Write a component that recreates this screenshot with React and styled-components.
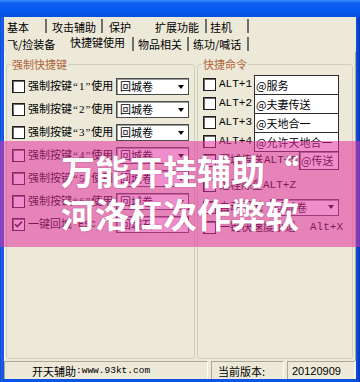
import React from "react";
import styled, { createGlobalStyle } from "styled-components";

const GlobalStyle = createGlobalStyle`
  html, body { margin: 0; padding: 0; background: #ECE9D8; }
  body { font-family: "Noto Sans CJK SC", "Liberation Sans", sans-serif; }
  #root { width: 360px; height: 382px; }
`;

const Win = styled.div`
  position: relative;
  width: 360px;
  height: 382px;
  display: flex;
  flex-direction: column;
  background: linear-gradient(to right, #0a3cc0 0, #1d64ee 1px, #0b53e2 4px, #0b53e2 356px, #083fc4 359px, #052fa8 360px);
  overflow: hidden;
`;

const TitleBar = styled.div`
  height: 17px;
  flex: none;
  background: linear-gradient(to bottom, #3e8ff8 0, #0d5ff4 3px, #0658ee 60%, #0550e2 100%);
`;

const Frame = styled.div`
  flex: 1;
  margin: 0 4px 3px 4px;
  background: #ECE9D8;
  display: flex;
  flex-direction: column;
  min-height: 0;
  font-size: 11px;
  color: #000;
`;

const TabRow = styled.div`
  display: flex;
  height: ${p => p.$h}px;
  flex: none;
`;

const Tab = styled.div`
  box-sizing: border-box;
  width: ${p => p.$w}px;
  padding-left: ${p => p.$pl}px;
  display: flex;
  align-items: center;
  justify-content: space-between;
  font-size: 11px;
  line-height: 13px;
  white-space: nowrap;
  & > span {
    position: relative;
    top: ${p => (p.$active ? -1 : 1)}px;
  }
  &::after {
    content: "";
    width: 2px;
    height: 14px;
    background: ${p => (p.$sep ? "#6f6f6f" : "transparent")};
  }
`;

const Panel = styled.div`
  flex: 1;
  min-height: 0;
  display: flex;
  gap: 2px;
  padding: 6px 2px 2px 1px;
  border-left: 1px solid #ffffff;
  border-right: 1px solid #aca899;
`;

const Group = styled.fieldset`
  margin: 0;
  min-width: 0;
  box-sizing: border-box;
  width: ${p => (p.$w ? `${p.$w}px` : "auto")};
  flex: ${p => (p.$w ? "none" : "1")};
  padding: 4px 4px 0 5px;
  border: 1px solid #d0d0bf;
  border-radius: 3px;
  display: block;
`;

const Legend = styled.legend`
  padding: 0 1px;
  margin-left: -1px;
  font-size: 11px;
  line-height: 13px;
  color: #b0653a;
`;

const LeftRow = styled.div`
  display: grid;
  grid-template-columns: 13px 85px 73px;
  column-gap: 3px;
  align-items: center;
  height: 23px;
  & > :first-child { margin-right: 1px; }
`;

const RightRow = styled.div`
  display: flex;
  align-items: ${p => (p.$top ? "flex-start" : "center")};
  height: ${p => p.$h}px;
  margin-top: ${p => p.$mt || 0}px;
`;

const CheckBox = styled.span`
  box-sizing: border-box;
  flex: none;
  width: 13px;
  height: 13px;
  background: #fff;
  border: 1px solid #1e1e1e;
  box-shadow: inset 1px 1px 0 #6a6a6a;
  display: flex;
  align-items: center;
  justify-content: center;
  align-self: center;
  margin-right: ${p => p.$mr || 0}px;
`;

const Label = styled.span`
  flex: none;
  width: ${p => (p.$w ? `${p.$w}px` : "auto")};
  white-space: nowrap;
  overflow: hidden;
  font-family: "Liberation Serif", "Noto Sans CJK SC", serif;
  font-size: 11px;
  line-height: 13px;
  align-self: center;
  display: flex;
  align-items: center;
`;

const Quoted = styled.span`
  letter-spacing: 1px;
  padding-left: 1px;
`;

const Key = styled.span`
  flex: none;
  width: ${p => (p.$w ? `${p.$w}px` : "auto")};
  font-family: "Liberation Mono", monospace;
  font-size: 11px;
  line-height: 13px;
  white-space: nowrap;
  align-self: center;
  margin-left: ${p => p.$ml || 0}px;
`;

const Esc = styled.span`
  font-family: "Liberation Mono", monospace;
  font-size: 10px;
  margin-left: 6px;
`;

const Select = styled.div`
  box-sizing: border-box;
  width: ${p => p.$w}px;
  height: 17px;
  flex: none;
  display: flex;
  align-items: center;
  background: #fff;
  border: 1px solid #4a4a4a;
  box-shadow: inset 1px 1px 0 #9a9a9a;
  align-self: center;
`;

const SelectValue = styled.span`
  flex: 1;
  padding-left: 3px;
  font-size: 11px;
  line-height: 13px;
  white-space: nowrap;
`;

const DropBtn = styled.span`
  width: 14px;
  height: 100%;
  display: flex;
  align-items: center;
  justify-content: center;
  &::before {
    content: "";
    border-left: 3.5px solid transparent;
    border-right: 3.5px solid transparent;
    border-top: 4px solid #000;
  }
`;

const TextBox = styled.div`
  box-sizing: border-box;
  flex: none;
  width: ${p => p.$w}px;
  height: ${p => p.$h}px;
  background: #fff;
  border: 1px solid #2e2e2e;
  padding-left: 1px;
  font-size: 11px;
  line-height: ${p => p.$h - 2}px;
  white-space: nowrap;
  overflow: hidden;
  box-shadow: ${p => (p.$sunken ? "inset 1px 1px 0 #8a8a8a" : "none")};
`;

const StatusBar = styled.div`
  height: 18px;
  flex: none;
  display: flex;
  gap: 3px;
  padding: 0 1px 0 0;
`;

const StatusCell = styled.div`
  box-sizing: border-box;
  width: ${p => (p.$w ? `${p.$w}px` : "auto")};
  flex: ${p => (p.$w ? "none" : "1")};
  height: 18px;
  border-top: 1px solid #aca899;
  border-left: 1px solid #aca899;
  border-right: 1px solid #ffffff;
  padding-left: ${p => p.$pl}px;
  display: flex;
  align-items: center;
  font-size: 11px;
  white-space: nowrap;
`;

const Url = styled.span`
  font-family: "Liberation Mono", monospace;
  font-size: 9.5px;
`;

const Version = styled.span`
  font-family: "Liberation Sans", sans-serif;
  font-size: 11px;
`;

const Overlay = styled.div`
  position: absolute;
  left: 0;
  right: 0;
  top: 141px;
  height: 106px;
  box-sizing: border-box;
  padding: 8px 0 0 61px;
  background: rgba(225, 50, 160, 0.55);
  pointer-events: none;
`;

const Slogan = styled.div`
  font-family: "Noto Sans CJK SC", sans-serif;
  font-weight: 700;
  font-size: 34px;
  line-height: 43px;
  color: #ffffff;
  white-space: nowrap;
  text-shadow: 0 0 2px rgba(110, 20, 70, 0.35);
`;

const Tick = () => (
  <svg width="9" height="9" viewBox="0 0 9 9">
    <path d="M1 4.2 L3.3 6.6 L8 1.6" fill="none" stroke="#111" strokeWidth="1.6" />
  </svg>
);

const Check = ({ on, mr }) => <CheckBox $mr={mr}>{on ? <Tick /> : null}</CheckBox>;

const Combo = ({ w, value }) => (
  <Select $w={w}>
    <SelectValue>{value}</SelectValue>
    <DropBtn />
  </Select>
);

const leftRows = [
  { n: "1", value: "回城卷" },
  { n: "2", value: "回城卷" },
  { n: "3", value: "回城卷" },
  { n: "4", value: "回城卷" },
  { n: "5", value: "回城卷" },
  { n: "6", value: "回城卷" },
];

const cmdRows = [
  { key: "ALT+1", text: "@服务" },
  { key: "ALT+2", text: "@夫妻传送" },
  { key: "ALT+3", text: "@天地合一" },
  { key: "ALT+4", text: "@允许天地合一" },
];

export default function App() {
  return (
    <>
      <GlobalStyle />
      <Win>
        <TitleBar />
        <Frame>
          <TabRow $h={18}>
            <Tab $w={43} $pl={3} $sep><span>基本</span></Tab>
            <Tab $w={56} $pl={5} $sep><span>攻击辅助</span></Tab>
            <Tab $w={47} $pl={6}><span>保护</span></Tab>
            <Tab $w={57} $pl={5} $sep><span>扩展功能</span></Tab>
            <Tab $w={42} $pl={3} $sep><span>挂机</span></Tab>
          </TabRow>
          <TabRow $h={17}>
            <Tab $w={60} $pl={3}><span>飞/捡装备</span></Tab>
            <Tab $w={70} $pl={6} $active $sep><span>快捷键使用</span></Tab>
            <Tab $w={55} $pl={4} $sep><span>物品相关</span></Tab>
            <Tab $w={60} $pl={4} $sep><span>练功/喊话</span></Tab>
          </TabRow>
          <Panel>
            <Group $w={189}>
              <Legend>强制快捷键</Legend>
              {leftRows.map((r, i) => (
                <LeftRow key={i}>
                  <Check />
                  <Label>强制按键<Quoted>“{r.n}”</Quoted>使用</Label>
                  <Combo w={73} value={r.value} />
                </LeftRow>
              ))}
              <LeftRow>
                <Check on />
                <Label>一键回城<Esc>Esc</Esc></Label>
                <Combo w={73} value="回城石" />
              </LeftRow>
            </Group>
            <Group>
              <Legend>快捷命令</Legend>
              {cmdRows.map((r, i) => (
                <RightRow key={i} $h={19} $top>
                  <Check mr={3} />
                  <Key $w={35}>{r.key}</Key>
                  <TextBox $w={85} $h={20}>{r.text}</TextBox>
                </RightRow>
              ))}
              <RightRow $h={19}>
                <Check mr={3} />
                <Label $w={45}>回城传送</Label>
                <Key $w={35}>ALT+5</Key>
                <TextBox $w={40} $h={19} $sunken>@传送</TextBox>
              </RightRow>
              <RightRow $h={22} $mt={4}>
                <Check mr={3} />
                <Label $w={44}>远程除垒</Label>
                <Key>ALT+Z</Key>
              </RightRow>
              <RightRow $h={22}>
                <Check mr={3} />
                <Label $w={51}>自动回城</Label>
                <Combo w={69} value="回城卷" />
              </RightRow>
              <RightRow $h={19}>
                <Check mr={3} />
                <Label $w={91}>一键快速度小退</Label>
                <Key>Alt+X</Key>
              </RightRow>
            </Group>
          </Panel>
          <StatusBar>
            <StatusCell $w={204} $pl={27}>开天辅助<Url>:www.93kt.com</Url></StatusCell>
            <StatusCell $w={73} $pl={6}>当前版本:</StatusCell>
            <StatusCell $pl={4}><Version>20120909</Version></StatusCell>
          </StatusBar>
        </Frame>
        <Overlay>
          <Slogan>万能开挂辅助“</Slogan>
          <Slogan>河洛杠次作弊软</Slogan>
        </Overlay>
      </Win>
    </>
  );
}
